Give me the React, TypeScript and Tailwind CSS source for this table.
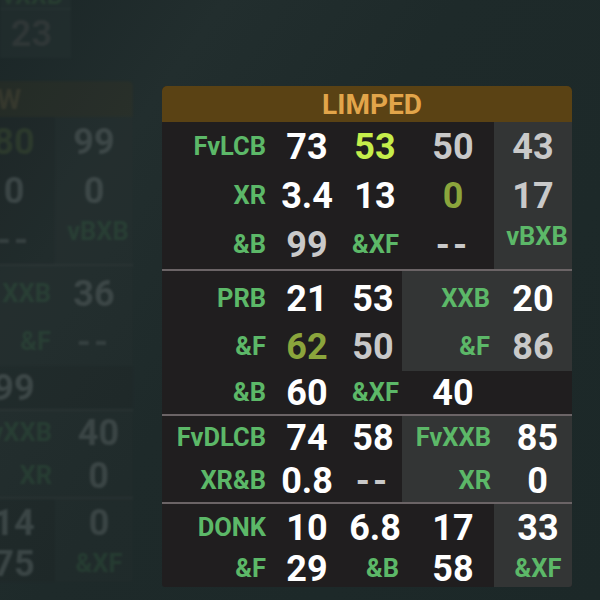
import React from "react";

type K = "w" | "g" | "l" | "o" | "n" | "d";
type Cell = [string, K?, string?];

const COLORS: Record<K, string> = {
  w: "text-[36px] text-white",
  g: "text-[36px] text-[#c9c9c9]",
  l: "text-[36px] text-[#c5ee4b]",
  o: "text-[36px] text-[#8ba53c]",
  n: "text-[25.5px] text-[#5cb868]",
  d: "text-[36px] text-[#c9c9c9] tracking-[3px]",
};

type PanelData = {
  title: string;
  s1: Cell[][];
  s1r: Cell[];
  s2: Cell[][];
  s2r: Cell[][];
  s2b: Cell[];
  s3: Cell[][];
  s3r: Cell[][];
  s4: Cell[][];
  s4r: Cell[];
};

const LEFT4 = ["justify-end pr-[4px]", "justify-center", "justify-center", "justify-center pl-[6px]"];
const LEFT3 = ["justify-end pr-[4px]", "justify-center", "justify-center"];
const LBL_B = "justify-end pr-[7px]";

function Txt({ c }: { c: Cell }) {
  const [t, k = "w"] = c;
  return <span className={COLORS[k]}>{t}</span>;
}

function Row({ cells, grid, al, h }: { cells: Cell[]; grid: string; al: string[]; h: string }) {
  return (
    <div className={`grid ${grid} ${h}`}>
      {cells.map((c, i) => (
        <div key={i} className={`flex items-center ${c[2] ?? al[i]}`}>
          <Txt c={c} />
        </div>
      ))}
    </div>
  );
}

const Sep = () => <div className="h-[2px] bg-[#6b6466]" />;

function Panel({ d }: { d: PanelData }) {
  return (
    <div className="w-[410px] rounded-t-[5px] rounded-b-[3px] overflow-hidden bg-[#201e1f] font-bold leading-none">
      <div className="h-[36px] bg-[#5a4214] flex items-center justify-center pl-[10px] pt-[1px] text-[28px] text-[#e2a54a]">
        {d.title}
      </div>

      {/* section 1 */}
      <div className="flex h-[147px]">
        <div className="w-[332px]">
          {d.s1.map((r, i) => (
            <Row key={i} cells={r} grid="grid-cols-[108px_74px_62px_88px]" al={LEFT4} h="h-[49px]" />
          ))}
        </div>
        <div className="w-[78px] bg-[#333535] flex flex-col">
          {d.s1r.map((c, i) => (
            <div key={i} className={`h-[49px] flex items-center justify-center ${c[2] ?? ""}`}>
              <Txt c={c} />
            </div>
          ))}
        </div>
      </div>
      <Sep />

      {/* section 2 */}
      <div className="flex h-[100px]">
        <div className="w-[240px] pt-[4px]">
          {d.s2.map((r, i) => (
            <Row key={i} cells={r} grid="grid-cols-[108px_74px_58px]" al={LEFT3} h="h-[48px]" />
          ))}
        </div>
        <div className="w-[170px] bg-[#333535] pt-[4px]">
          {d.s2r.map((r, i) => (
            <Row key={i} cells={r} grid="grid-cols-[88px_82px]" al={["justify-end", "justify-center pl-[4px]"]} h="h-[48px]" />
          ))}
        </div>
      </div>
      <Row cells={d.s2b} grid="grid-cols-[108px_74px_62px_88px]" al={LEFT4} h="h-[43px]" />
      <Sep />

      {/* section 3 */}
      <div className="flex h-[86px]">
        <div className="w-[240px]">
          {d.s3.map((r, i) => (
            <Row key={i} cells={r} grid="grid-cols-[108px_74px_58px]" al={LEFT3} h="h-[43px]" />
          ))}
        </div>
        <div className="w-[170px] bg-[#333535]">
          {d.s3r.map((r, i) => (
            <Row key={i} cells={r} grid="grid-cols-[89px_81px]" al={["justify-end", "justify-center pl-[12px]"]} h="h-[43px]" />
          ))}
        </div>
      </div>
      <Sep />

      {/* section 4 */}
      <div className="flex h-[83px]">
        <div className="w-[332px] pt-[3px]">
          {d.s4.map((r, i) => (
            <Row key={i} cells={r} grid="grid-cols-[108px_74px_62px_88px]" al={LEFT4} h="h-[41px]" />
          ))}
        </div>
        <div className="w-[78px] bg-[#333535] pt-[3px]">
          {d.s4r.map((c, i) => (
            <div key={i} className="h-[41px] flex items-center justify-center pl-[10px]">
              <Txt c={c} />
            </div>
          ))}
        </div>
      </div>
    </div>
  );
}

const MAIN: PanelData = {
  title: "LIMPED",
  s1: [
    [["FvLCB", "n"], ["73"], ["53", "l"], ["50", "g"]],
    [["XR", "n"], ["3.4"], ["13"], ["0", "o"]],
    [["&B", "n"], ["99", "g"], ["&XF", "n", LBL_B], ["--", "d"]],
  ],
  s1r: [["43", "g"], ["17", "g"], ["vBXB", "n", "pl-[8px] pb-[16px]"]],
  s2: [
    [["PRB", "n"], ["21"], ["53"]],
    [["&F", "n"], ["62", "o"], ["50", "g"]],
  ],
  s2r: [
    [["XXB", "n"], ["20"]],
    [["&F", "n"], ["86", "g"]],
  ],
  s2b: [["&B", "n"], ["60"], ["&XF", "n", LBL_B], ["40"]],
  s3: [
    [["FvDLCB", "n"], ["74"], ["58"]],
    [["XR&B", "n"], ["0.8"], ["--", "d"]],
  ],
  s3r: [
    [["FvXXB", "n"], ["85"]],
    [["XR", "n"], ["0"]],
  ],
  s4: [
    [["DONK", "n"], ["10"], ["6.8"], ["17"]],
    [["&F", "n"], ["29"], ["&B", "n", LBL_B], ["58"]],
  ],
  s4r: [["33"], ["&XF", "n"]],
};

const GHOST: PanelData = {
  title: "RAISED FLOW",
  s1: [
    [["FvCB", "n"], ["61"], ["44"], ["80", "o"]],
    [["XR", "n"], ["5.0"], ["9"], ["0"]],
    [["&B", "n"], ["71"], ["&XF", "n", LBL_B], ["--", "d"]],
  ],
  s1r: [["99"], ["0"], ["vBXB", "n", "pl-[8px] pb-[16px]"]],
  s2: [
    [["PRB", "n"], ["30"], ["47"]],
    [["&F", "n"], ["55"], ["48"]],
  ],
  s2r: [
    [["XXB", "n"], ["36"]],
    [["&F", "n"], ["--", "d"]],
  ],
  s2b: [["&B", "n"], ["52"], ["&XF", "n", LBL_B], ["99"]],
  s3: [
    [["FvDLCB", "n"], ["66"], ["50"]],
    [["XR&B", "n"], ["1.2"], ["--", "d"]],
  ],
  s3r: [
    [["FvXXB", "n"], ["40"]],
    [["XR", "n"], ["0"]],
  ],
  s4: [
    [["DONK", "n"], ["8"], ["4.1"], ["14"]],
    [["&F", "n"], ["33"], ["&B", "n", LBL_B], ["75"]],
  ],
  s4r: [["0"], ["&XF", "n"]],
};

export default function App() {
  return (
    <div
      className="relative w-[600px] h-[600px] overflow-hidden bg-[linear-gradient(125deg,#1b2627_0%,#222e2e_22%,#1e2a2a_45%,#1c2828_100%)]"
      style={{ fontFamily: "Roboto, 'Liberation Sans', sans-serif" }}
    >
      {/* blurred background windows */}
      <div className="absolute left-0 top-[-20px] w-[71px] h-[78px] bg-[#243030] opacity-60 blur-[1px] font-bold leading-none">
        <div className="h-[28px] flex items-end justify-center pr-[6px] text-[25px] text-[#2e4a36]">vXXB</div>
        <div className="h-[2px] bg-[#2a3535]" />
        <div className="h-[48px] flex items-center justify-center pr-[8px] text-[36px] text-[#3c4141]">23</div>
      </div>
      <div className="absolute left-[-277px] top-[81px] opacity-[0.12] blur-[1px]">
        <Panel d={GHOST} />
      </div>

      <div className="pl-[162px] pt-[86px]">
        <Panel d={MAIN} />
      </div>
    </div>
  );
}
